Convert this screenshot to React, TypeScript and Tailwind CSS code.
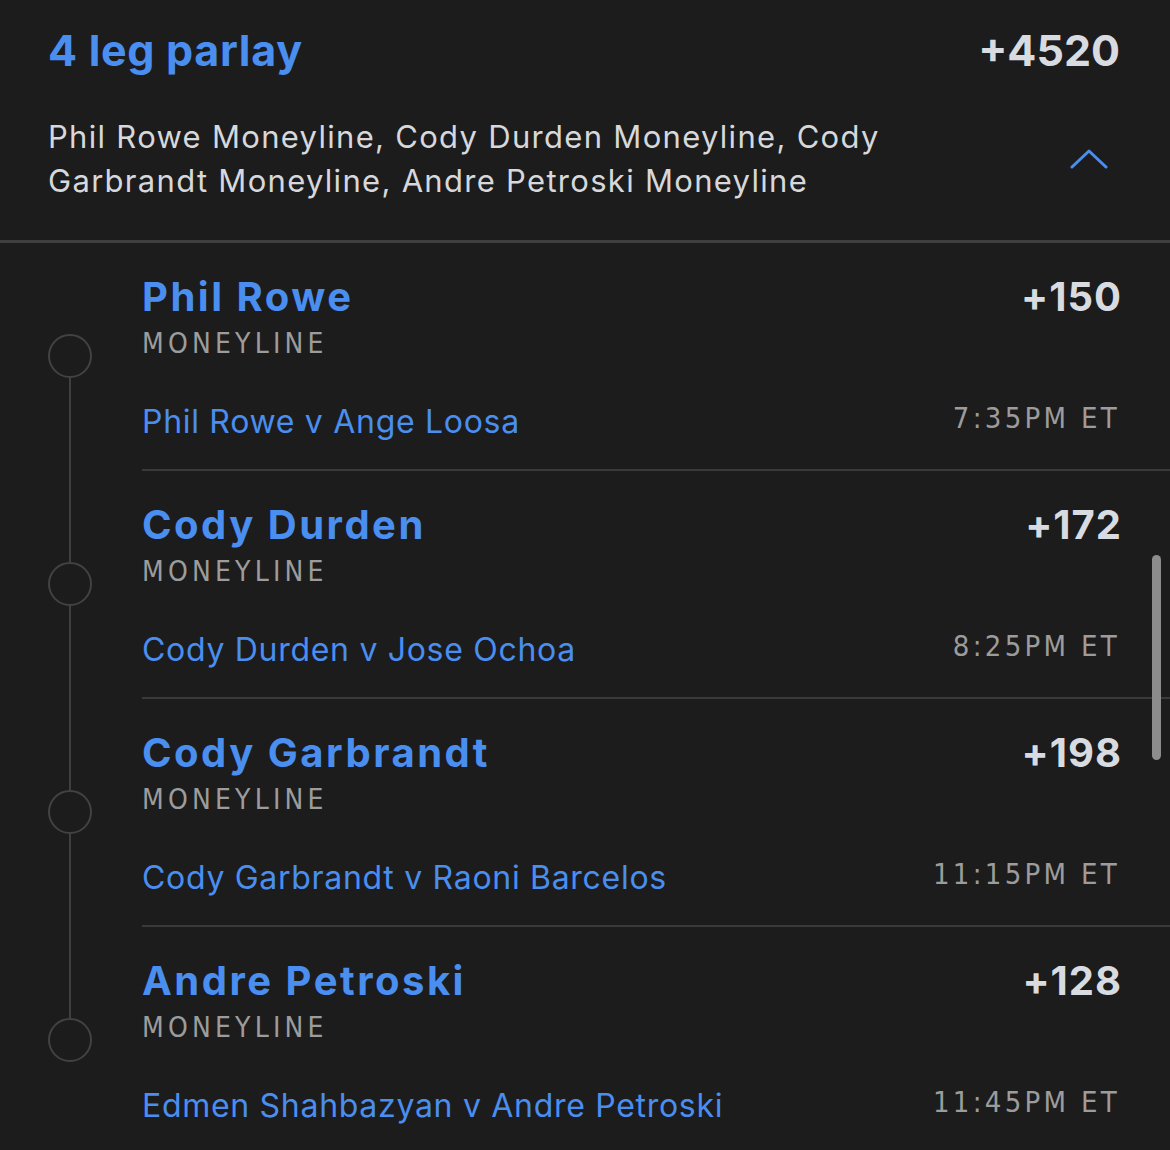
import React from 'react';

const legs = [
  { name: 'Phil Rowe', odds: '+150', match: 'Phil Rowe v Ange Loosa', time: '7:35PM ET' },
  { name: 'Cody Durden', odds: '+172', match: 'Cody Durden v Jose Ochoa', time: '8:25PM ET' },
  { name: 'Cody Garbrandt', odds: '+198', match: 'Cody Garbrandt v Raoni Barcelos', time: '11:15PM ET' },
  { name: 'Andre Petroski', odds: '+128', match: 'Edmen Shahbazyan v Andre Petroski', time: '11:45PM ET' },
];

const Leg: React.FC<{ leg: (typeof legs)[number]; first: boolean; last: boolean }> = ({ leg, first, last }) => (
  <div className="flex">
    {/* timeline column */}
    <div className="w-[142px] shrink-0 flex flex-col pl-[48px]">
      <div className={`ml-[21px] w-[2px] h-[91px] ${first ? '' : 'bg-[#3f3f3f]'}`}></div>
      <div className="w-[44px] h-[44px] rounded-full border-2 border-[#424242]"></div>
      <div className={`ml-[21px] w-[2px] flex-1 ${last ? '' : 'bg-[#3f3f3f]'}`}></div>
    </div>
    <div className={`flex-1 pt-[30px] pr-[50px] ${last ? 'pb-[27px]' : 'pb-[27px] border-b-2 border-[#3a3a3a]'}`}>
      <div className="flex justify-between items-baseline">
        <span className="text-[40px] leading-[48px] font-bold tracking-[2.5px] text-[#4a8ef0]">{leg.name}</span>
        <span className="text-[40px] leading-[48px] font-bold tracking-[1px] text-[#d8dbe0] -mr-[2px]">{leg.odds}</span>
      </div>
      <div className="font-['DejaVu_Sans_Condensed','Roboto',sans-serif] text-[28px] leading-[36px] tracking-[4.2px] text-[#9c9c9c] mt-[5px]">MONEYLINE</div>
      <div className="flex justify-between items-center mt-[40px]">
        <span className="text-[32px] leading-[40px] tracking-[0.7px] text-[#4a8ef0]">{leg.match}</span>
        <span className="font-['DejaVu_Sans_Condensed','Roboto',sans-serif] text-[29px] leading-[36px] tracking-[3.3px] text-[#9c9c9c] -mt-[8px]">{leg.time}</span>
      </div>
    </div>
  </div>
);

export default function App() {
  return (
    <div className="relative w-[1170px] h-[1150px] overflow-hidden bg-[#1c1c1c] font-['Inter',sans-serif]">
      <div className="pl-[48px] pr-[50px] pt-[22px]">
        <div className="flex justify-between items-baseline">
          <span className="text-[43px] leading-[56px] font-bold tracking-[0.7px] text-[#4a8ef0]">4 leg parlay</span>
          <span className="text-[43px] leading-[56px] font-bold tracking-[0px] text-[#d8dbe0]">+4520</span>
        </div>
        <div className="flex justify-between items-center mt-[37px] pb-[37px]">
          <p className="w-[900px] text-[31px] leading-[44px] tracking-[1.3px] text-[#d6d8dc]">
            Phil Rowe Moneyline, Cody Durden Moneyline, Cody Garbrandt Moneyline, Andre Petroski Moneyline
          </p>
          <svg width="38" height="22" viewBox="0 0 38 22" className="mr-[12px]">
            <polyline points="2,19 19,3 36,19" fill="none" stroke="#4a8ef0" strokeWidth="3" strokeLinecap="round" strokeLinejoin="round" />
          </svg>
        </div>
      </div>
      <div className="h-[3px] bg-[#3f3f3f]"></div>
      <div>
        {legs.map((leg, i) => (
          <Leg key={leg.name} leg={leg} first={i === 0} last={i === legs.length - 1} />
        ))}
      </div>
      {/* scrollbar */}
      <div className="absolute left-[1152px] top-[555px] w-[9px] h-[205px] rounded-full bg-[#8c8c8c]"></div>
    </div>
  );
}
